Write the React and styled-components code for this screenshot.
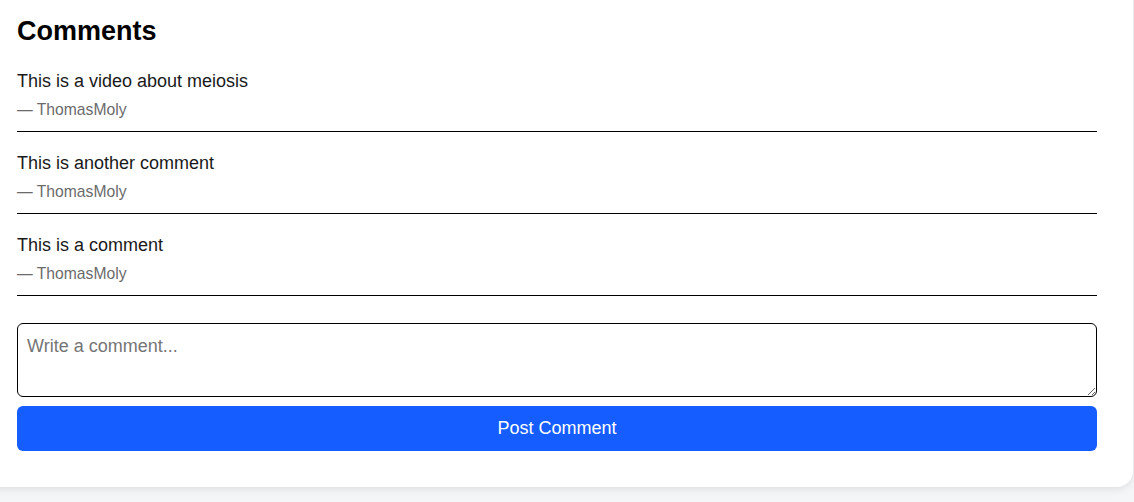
import styled, { createGlobalStyle } from "styled-components";

const comments = [
  { id: 1, text: "This is a video about meiosis", author: "ThomasMoly" },
  { id: 2, text: "This is another comment", author: "ThomasMoly" },
  { id: 3, text: "This is a comment", author: "ThomasMoly" },
];

function App() {
  return (
    <>
      <GlobalStyle />
      <Page>
        <Card>
          <Title>Comments</Title>
          <CommentList>
            {comments.map((c) => (
              <CommentItem key={c.id}>
                <CommentText>{c.text}</CommentText>
                <Author>— {c.author}</Author>
              </CommentItem>
            ))}
          </CommentList>
          <CommentForm onSubmit={(e) => e.preventDefault()}>
            <TextArea placeholder="Write a comment..." />
            <PostButton type="submit">Post Comment</PostButton>
          </CommentForm>
        </Card>
      </Page>
    </>
  );
}

export default App;

const GlobalStyle = createGlobalStyle`
  * {
    box-sizing: border-box;
  }
  body {
    margin: 0;
    background: #f5f6f8;
    font-family: "Liberation Sans", Arial, sans-serif;
    overflow: hidden;
  }
`;

// 페이지 전체
const Page = styled.main`
  padding-bottom: 15px;
`;

// 카드 (화면 밖으로 잘린 상태)
const Card = styled.section`
  margin: -20px 1px 0 -19px;
  padding: 35px 36px 36px 36px;
  background: #fff;
  border-radius: 16px;
  box-shadow: 0 2px 8px rgba(0, 0, 0, 0.1);
`;

const Title = styled.h2`
  margin: 0;
  font-size: 27px;
  line-height: 32px;
  font-weight: 700;
  color: #000;
`;

// 댓글 목록
const CommentList = styled.ul`
  list-style: none;
  margin: 3px 0 0;
  padding: 0;
`;

const CommentItem = styled.li`
  padding: 20px 0 11px;
  border-bottom: 1px solid #000;
`;

const CommentText = styled.p`
  margin: 0;
  font-size: 18px;
  line-height: 22px;
  color: #1a1a1a;
`;

const Author = styled.p`
  margin: 8px 0 0;
  font-size: 15.7px;
  line-height: 20px;
  color: #6b6b6b;
`;

// 입력 폼
const CommentForm = styled.form`
  display: flex;
  flex-direction: column;
  gap: 9px;
  margin-top: 27px;
`;

const TextArea = styled.textarea`
  width: 100%;
  height: 74px;
  padding: 12px 9px 10px;
  border: 1px solid #000;
  border-radius: 6px;
  font-family: "Liberation Sans", Arial, sans-serif;
  font-size: 18px;
  color: #1a1a1a;
  resize: vertical;
  outline: none;

  &::placeholder {
    color: #757575;
  }
`;

const PostButton = styled.button`
  height: 45px;
  border: none;
  border-radius: 6px;
  background: #165dff;
  color: #fff;
  font-family: "Liberation Sans", Arial, sans-serif;
  font-size: 18px;
  cursor: pointer;
`;
